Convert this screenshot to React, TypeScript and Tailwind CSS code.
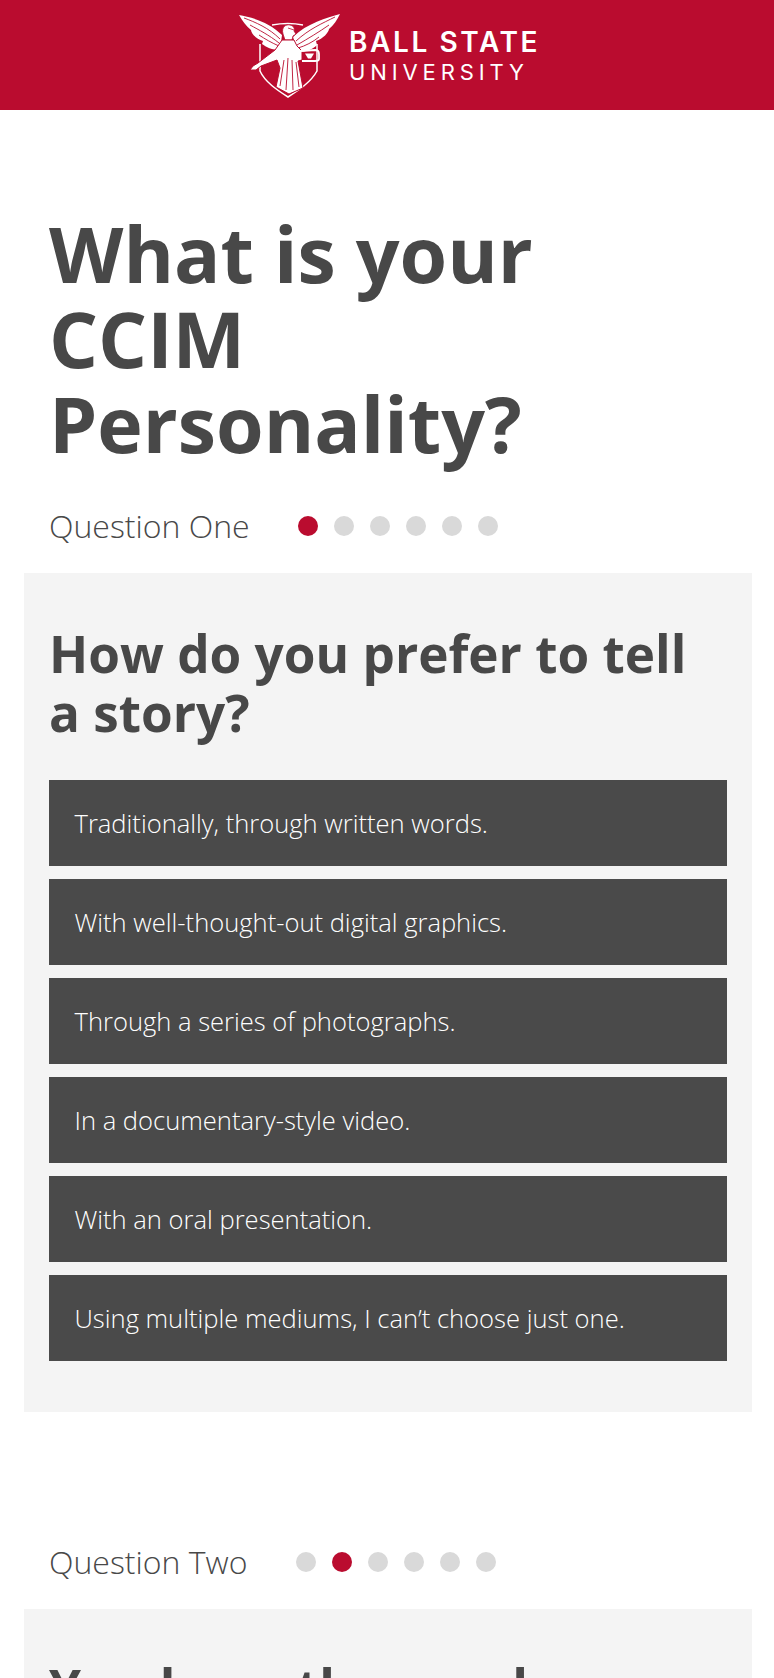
const answers = [
  'Traditionally, through written words.',
  'With well-thought-out digital graphics.',
  'Through a series of photographs.',
  'In a documentary-style video.',
  'With an oral presentation.',
  'Using multiple mediums, I can’t choose just one.',
]

function Logo() {
  return (
    <svg viewBox="0 0 101 84" className="w-[101px] h-[84px] shrink-0" fill="#fff">
      {/* shield outline */}
      <path d="M21 30 L21 57 C26 68 38 76 49 83 C60 76 72 68 78 57 L78 30" fill="none" stroke="#fff" strokeWidth="1.5" />
      <path d="M33 11 Q49 8 64 11" fill="none" stroke="#fff" strokeWidth="1.3" />
      {/* wings */}
      <path d="M0 1 C12 3 30 8 43 21 L41 36 C33 36 27 33 23 30 L24 27 C17 25 12 19 12 16 C7 12 3 6 0 1Z" />
      <path d="M101 0 C88 4 68 9 54 23 L59 38 C68 38 74 35 78 31 L77 27 C84 25 90 18 90 15 C95 11 98 6 101 0Z" />
      <g fill="none" stroke="#ba0c2f" strokeWidth="0.9">
        <path d="M5 4 C16 8 30 14 41 25" />
        <path d="M11 11 C20 16 30 21 40 29" />
        <path d="M20 21 C26 25 33 29 40 32" />
        <path d="M96 3 C84 9 70 15 57 27" />
        <path d="M90 11 C80 18 70 24 58 31" />
        <path d="M80 23 C74 28 66 32 59 34" />
      </g>
      {/* figure */}
      <path d="M44 20 C42 13 47 10 51 11 C55 12 56 15 55 17 L57 20 L54 22 L53 26 L46 26Z" stroke="#ba0c2f" strokeWidth="0.8" />
      <path d="M49 14 L55 16" fill="none" stroke="#ba0c2f" strokeWidth="0.8" />
      <path d="M43 26 L55 26 L58 32 L63 37 L63 46 L59 47 L64 74 L50 80 L37 73 L41 54 L38 46 L22 52 L17 56 L11 56 L14 52 L19 49 L36 36 Z" stroke="#ba0c2f" strokeWidth="1" />
      <g fill="none" stroke="#ba0c2f" strokeWidth="0.9">
        <path d="M45 46 L41 72" />
        <path d="M49 44 L47 76" />
        <path d="M53 46 L54 76" />
        <path d="M57 48 L60 73" />
      </g>
      {/* book */}
      <path d="M62 37 L76 36 C79 36 80 38 80 40 L80 45 C80 47 78 47 76 47 L63 47" fill="none" stroke="#fff" strokeWidth="1.8" />
      <path d="M66 39.5 L75 39.5 L72 44.5 L69 44.5Z" />
    </svg>
  )
}

function Dots({ active }: { active: number }) {
  return (
    <div className="flex gap-4">
      {[0, 1, 2, 3, 4, 5].map((i) => (
        <span
          key={i}
          className={i === active ? 'w-5 h-5 rounded-full bg-[#ba0c2f]' : 'w-5 h-5 rounded-full bg-[#d9d9d9]'}
        />
      ))}
    </div>
  )
}

export default function App() {
  return (
    <div className="h-[1678px] overflow-hidden bg-white text-[#484848] font-['Open_Sans',sans-serif]">
      {/* Header */}
      <header className="h-[110px] bg-[#ba0c2f] flex items-center justify-center gap-[9px] pt-[2px] pl-[5px]">
        <Logo />
        <div className="text-white font-['Inter',sans-serif] flex flex-col gap-[4px] -mt-[1px]">
          <div className="text-[28px] leading-[28px] font-semibold tracking-[2.6px]">BALL STATE</div>
          <div className="text-[22px] leading-[24px] tracking-[4.9px]">UNIVERSITY</div>
        </div>
      </header>

      {/* Title */}
      <h1 className="mt-[101px] px-[49px] text-[77px] leading-[85px] font-bold max-w-[620px]">
        What is your CCIM Personality?
      </h1>

      {/* Question one */}
      <div className="mt-[35px] h-[50px] pl-[49px] flex items-center">
        <span className="text-[32px] font-light w-[249px]">Question One</span>
        <Dots active={0} />
      </div>
      <section className="mt-[22px] mx-6 w-[728px] h-[839px] bg-[#f4f4f4] pt-[51px] px-[25px]">
        <h2 className="text-[51.25px] leading-[59px] font-bold">How do you prefer to tell a story?</h2>
        <div className="mt-[38px] flex flex-col gap-[13px]">
          {answers.map((a) => (
            <button
              key={a}
              className="h-[86px] bg-[#4a4a4a] text-white text-[25.55px] font-light text-left px-[25.5px]"
            >
              {a}
            </button>
          ))}
        </div>
      </section>

      {/* Question two */}
      <div className="mt-[125px] h-[50px] pl-[49px] flex items-center">
        <span className="text-[32px] font-light w-[247px]">Question Two</span>
        <Dots active={1} />
      </div>
      <section className="mt-[22px] mx-6 w-[728px] h-[300px] bg-[#f4f4f4] pt-[49px] px-[25px]">
        <h2 className="text-[51.25px] leading-[59px] font-bold">You have the word</h2>
      </section>
    </div>
  )
}
